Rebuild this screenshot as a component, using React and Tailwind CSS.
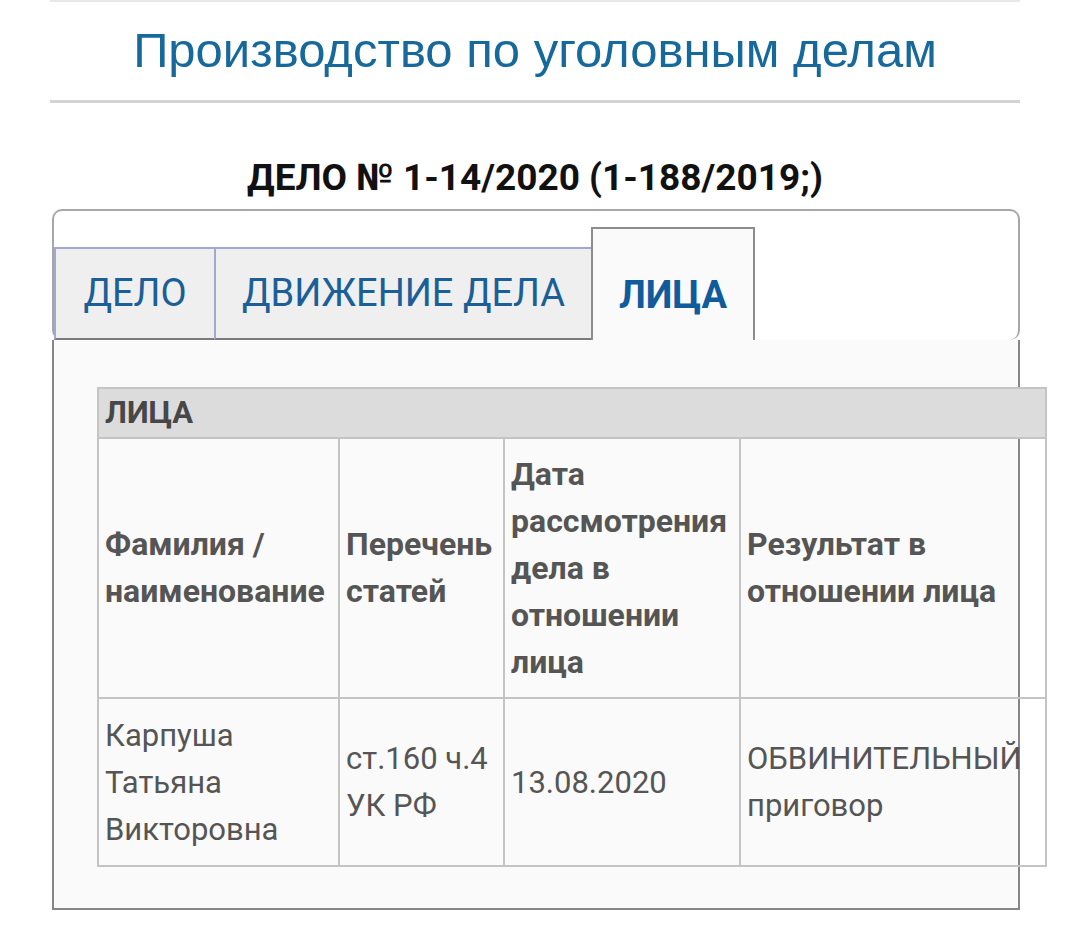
import React from 'react';

const tabs = [
  { label: 'ДЕЛО', w: 'w-[160px]' },
  { label: 'ДВИЖЕНИЕ ДЕЛА', w: 'w-[377px]' },
];

function App() {
  return (
    <div className="w-[1080px] h-[926px] bg-white overflow-hidden">
      <div className="ml-[50px] w-[970px]">
        <div className="h-[2px] bg-[#e8e8e8]" />
        <h2 className="h-[98px] flex items-center justify-center text-[49px] text-[#17699b] font-['Liberation_Sans',Arial,sans-serif]">
          Производство по уголовным делам
        </h2>
        <div className="h-[3px] bg-[#d3d3d3]" />

        <h1 className="mt-[53px] mb-[9px] leading-[44px] text-center text-[37px] font-bold text-[#111] font-['Roboto',sans-serif]">
          ДЕЛО № 1-14/2020 (1-188/2019;)
        </h1>

        <div className="ml-[2px] w-[968px] font-['Roboto',sans-serif]">
          {/* tab nav */}
          <div className="h-[131px] border-2 border-b-0 border-[#a7a7a7] rounded-[10px] flex items-end">
            {tabs.map((t) => (
              <div
                key={t.label}
                className={`${t.w} h-[93px] bg-[#efefef] border-2 border-[#a4a7cf] border-b-[#7b7b7b] border-r-0 flex items-end justify-center pb-[22px]`}
              >
                <span className="leading-[46px] text-[38px] text-[#1a5f98]">{t.label}</span>
              </div>
            ))}
            <div className="w-[164px] h-[113px] bg-[#fafafa] border-2 border-b-0 border-[#8d8d8d] flex items-end justify-center pb-[22px]">
              <span className="leading-[46px] text-[38px] font-bold text-[#0f5b9b]">ЛИЦА</span>
            </div>
          </div>

          {/* panel */}
          <div className="h-[570px] bg-[#fafafa] border-2 border-t-0 border-[#868686] pt-[47px] pl-[43px]">
            <table className="w-[948px] table-fixed border-collapse text-[#555]">
              <colgroup>
                <col className="w-[241px]" />
                <col className="w-[165px]" />
                <col className="w-[236px]" />
                <col className="w-[306px]" />
              </colgroup>
              <thead>
                <tr>
                  <th colSpan={4} className="h-[50px] bg-[#dcdcdc] border-2 border-[#c4c4c4] px-[6px] text-left text-[31px] font-bold text-[#474747] leading-[46px]">
                    ЛИЦА
                  </th>
                </tr>
                <tr className="text-[32px] font-bold leading-[47px]">
                  <th className="h-[260px] border-2 border-[#c4c4c4] px-[6px] text-left align-middle font-bold">Фамилия / наименование</th>
                  <th className="border-2 border-[#c4c4c4] px-[6px] text-left align-middle font-bold">Перечень статей</th>
                  <th className="border-2 border-[#c4c4c4] px-[6px] text-left align-middle font-bold">Дата рассмотрения дела в отношении лица</th>
                  <th className="border-2 border-[#c4c4c4] px-[6px] text-left align-middle font-bold">Результат в отношении лица</th>
                </tr>
              </thead>
              <tbody>
                <tr className="text-[31px] leading-[47px]">
                  <td className="h-[168px] border-2 border-[#c4c4c4] px-[6px] align-middle">Карпуша Татьяна Викторовна</td>
                  <td className="border-2 border-[#c4c4c4] px-[6px] align-middle">ст.160 ч.4 УК РФ</td>
                  <td className="border-2 border-[#c4c4c4] px-[6px] align-middle">13.08.2020</td>
                  <td className="border-2 border-[#c4c4c4] px-[6px] align-middle whitespace-nowrap">ОБВИНИТЕЛЬНЫЙ<br />приговор</td>
                </tr>
              </tbody>
            </table>
          </div>
        </div>
      </div>
    </div>
  );
}

export default App;
